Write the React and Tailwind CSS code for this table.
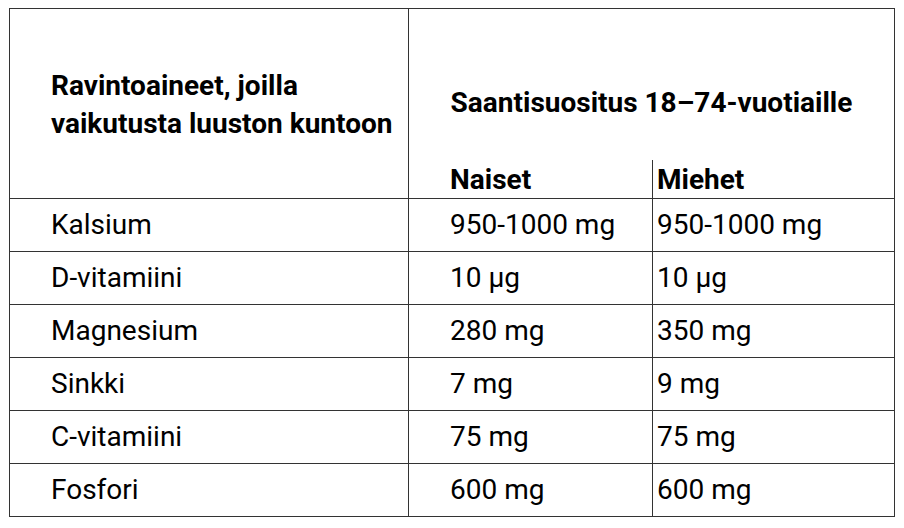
export default function App() {
  const rows = [
    ["Kalsium", "950-1000 mg", "950-1000 mg"],
    ["D-vitamiini", "10 µg", "10 µg"],
    ["Magnesium", "280 mg", "350 mg"],
    ["Sinkki", "7 mg", "9 mg"],
    ["C-vitamiini", "75 mg", "75 mg"],
    ["Fosfori", "600 mg", "600 mg"],
  ];

  return (
    <div className="w-[904px] h-[528px] bg-white pt-[8px] pl-[9px] font-['Roboto',sans-serif] text-black">
      <div className="w-[886px] border border-[#333]">
        {/* Header */}
        <div className="grid grid-cols-[399px_1fr] h-[190px] border-b border-[#333]">
          <div className="border-r border-[#333] flex items-center pl-[41px] pt-[2px]">
            <h2 className="text-[28px] font-bold leading-[38px]">
              Ravintoaineet, joilla
              <br />
              vaikutusta luuston kuntoon
            </h2>
          </div>
          <div className="flex flex-col">
            <div className="flex-1 flex items-center justify-center pt-[36px]">
              <h2 className="text-[28px] font-bold leading-none">Saantisuositus 18–74-vuotiaille</h2>
            </div>
            <div className="grid grid-cols-[244px_1fr] h-[38px]">
              <div className="border-r border-[#333] pl-[41px] pt-[1px] text-[28px] font-bold leading-[38px]">Naiset</div>
              <div className="pl-[4px] pt-[1px] text-[28px] font-bold leading-[38px]">Miehet</div>
            </div>
          </div>
        </div>

        {/* Body */}
        {rows.map((r, i) => (
          <div
            key={r[0]}
            className={
              "grid grid-cols-[399px_244px_1fr] text-[28px] " +
              (i < rows.length - 1 ? "h-[53px] border-b border-[#333]" : "h-[52px]")
            }
          >
            <div className="border-r border-[#333] pl-[41px] flex items-center">{r[0]}</div>
            <div className="border-r border-[#333] pl-[41px] flex items-center">{r[1]}</div>
            <div className="pl-[4px] flex items-center">{r[2]}</div>
          </div>
        ))}
      </div>
    </div>
  );
}
